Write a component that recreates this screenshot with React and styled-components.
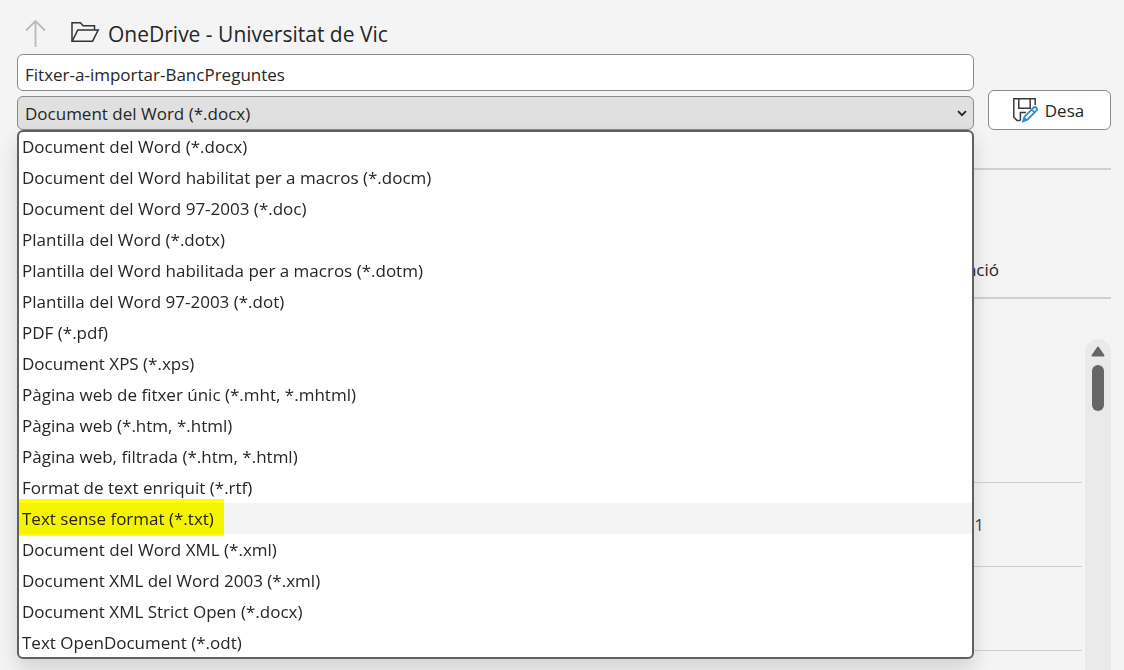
import React, { useState } from 'react';
import styled, { createGlobalStyle } from 'styled-components';

const formats = [
    'Document del Word (*.docx)',
    'Document del Word habilitat per a macros (*.docm)',
    'Document del Word 97-2003 (*.doc)',
    'Plantilla del Word (*.dotx)',
    'Plantilla del Word habilitada per a macros (*.dotm)',
    'Plantilla del Word 97-2003 (*.dot)',
    'PDF (*.pdf)',
    'Document XPS (*.xps)',
    'Pàgina web de fitxer únic (*.mht, *.mhtml)',
    'Pàgina web (*.htm, *.html)',
    'Pàgina web, filtrada (*.htm, *.html)',
    'Format de text enriquit (*.rtf)',
    'Text sense format (*.txt)',
    'Document del Word XML (*.xml)',
    'Document XML del Word 2003 (*.xml)',
    'Document XML Strict Open (*.docx)',
    'Text OpenDocument (*.odt)',
];

const ArrowUp = () => (
    <svg width='22' height='28' viewBox='0 0 22 28' fill='none' stroke='#bababa' strokeWidth='1.8' aria-hidden='true'>
        <path d='M11.500 28V2M2 11.500 11.500 2l9.500 9.500' />
    </svg>
);

const FolderOpen = () => (
    <svg width='30' height='22' viewBox='0 0 30 22' fill='none' stroke='#333' strokeWidth='1.5' strokeLinejoin='miter' aria-hidden='true'>
        <path d='M2 20.200V1.800h8.500l2.600 3h11.400v4' />
        <path d='M2.200 20.200 7.800 9h20.400l-5.600 11.200z' />
    </svg>
);

const SaveAs = () => (
    <svg width='26' height='26' viewBox='0 0 26 26' fill='none' strokeWidth='1.500' aria-hidden='true'>
        <g stroke='#3b3b3b'>
            <path d='M23.200 8V1.800H1.800v18.400l3.200 3.200h3.400' />
            <path d='M6.800 1.800v9.400h11.400V1.800' />
            <path d='M8.400 23.400v-7.800h5.600' />
        </g>
        <path d='M11.200 24.200l1.600-4.800 8.600-8.600a2 2 0 0 1 2.900 2.900l-8.600 8.700z' stroke='#2b8fd6' strokeWidth='1.900' fill='#fff' />
        <path d='M10 25.200l1.900-5.600 3.700 3.700z' fill='#2b8fd6' />
        <path d='M19.600 12.600l2.900 2.900' stroke='#2b8fd6' />
    </svg>
);

const App = () => {
    const [name, setName] = useState('Fitxer-a-importar-BancPreguntes');
    const [format, setFormat] = useState(formats[0]);

    return (
        <>
            <GlobalStyle />
            <Page>
                <Location>
                    <UpButton type='button' aria-label='Amunt'><ArrowUp /></UpButton>
                    <FolderOpen />
                    <h1>OneDrive - Universitat de Vic</h1>
                </Location>

                <SaveForm onSubmit={(e) => e.preventDefault()}>
                    <Fields>
                        <NameInput aria-label='Nom del fitxer' value={name} onChange={(e) => setName(e.target.value)} />
                        <SelectBox>
                            <FormatSelect aria-label='Tipus de fitxer' value={format} onChange={(e) => setFormat(e.target.value)}>
                                {formats.map((f) => <option key={f}>{f}</option>)}
                            </FormatSelect>
                            <Chevron viewBox='0 0 10 7' aria-hidden='true'>
                                <path d='M1 1.200 5 5.200l4-4' />
                            </Chevron>
                            <Menu role='listbox' aria-label='Tipus de fitxer'>
                                {formats.map((f, i) => (
                                    <MenuItem key={f} role='option' aria-selected={f === format} $active={i === 12} onClick={() => setFormat(f)}>
                                        {f}
                                    </MenuItem>
                                ))}
                            </Menu>
                        </SelectBox>
                    </Fields>
                    <SaveButton type='submit'>
                        <SaveAs />
                        Desa
                    </SaveButton>
                </SaveForm>

                <ListHeader>ació</ListHeader>

                <Files>
                    <FileTable>
                        <tbody>
                            <FileRow $tall><td /></FileRow>
                            <FileRow><td>1</td></FileRow>
                            <FileRow><td /></FileRow>
                            <FileRow><td /></FileRow>
                        </tbody>
                    </FileTable>
                    <ScrollTrack>
                        <svg width='14' height='11' viewBox='0 0 14 11' aria-hidden='true'>
                            <path d='M7 1.500 12.500 9.500h-11z' fill='#666' stroke='#666' strokeWidth='2' strokeLinejoin='round' />
                        </svg>
                        <ScrollThumb />
                    </ScrollTrack>
                </Files>
            </Page>
        </>
    );
};

const GlobalStyle = createGlobalStyle`
* {
    box-sizing: border-box;
}

body {
    margin: 0;
    background: #f4f4f4;
    color: #262626;
    font-family: 'Segoe UI', 'Open Sans', 'Noto Sans', sans-serif;
    font-size: 17px;
}

input, select, button {
    font: inherit;
    color: inherit;
}
`;

const Page = styled.main`
    display: flex;
    flex-direction: column;
    height: 100vh;
    padding: 0 13px 0 17px;
    overflow: hidden;
`;

const Location = styled.header`
    display: flex;
    align-items: center;
    height: 54px;
    padding: 12px 0 0 7px;

    h1 {
        margin: 2px 0 0 8px;
        font-size: 21px;
        font-weight: 400;
        line-height: 32px;
    }

    > svg {
        margin-bottom: 3px;
    }
`;

const UpButton = styled.button`
    display: flex;
    margin-right: 24px;
    padding: 0;
    border: 0;
    background: none;
`;

const SaveForm = styled.form`
    display: flex;
    align-items: flex-end;
    gap: 14px;
`;

const Fields = styled.div`
    display: flex;
    flex: 1;
    flex-direction: column;
    gap: 5px;
`;

const NameInput = styled.input`
    width: 100%;
    height: 37px;
    padding: 4px 7px 0;
    border: 1px solid #8a8a8a;
    border-radius: 6px;
    background: #fff;
    outline: none;
`;

const SelectBox = styled.div`
    position: relative;
`;

const FormatSelect = styled.select`
    display: block;
    width: 100%;
    height: 34px;
    padding: 0 7px;
    border: 1px solid #8a8a8a;
    border-radius: 6px;
    background: #e0e0e0;
    appearance: none;
`;

const Chevron = styled.svg`
    position: absolute;
    top: 14px;
    right: 7px;
    width: 10px;
    height: 7px;
    fill: none;
    stroke: #222;
    stroke-width: 1.700;
    pointer-events: none;
`;

const Menu = styled.ul`
    position: absolute;
    top: 100%;
    left: 0;
    right: 0;
    z-index: 2;
    margin: 0;
    padding: 0;
    list-style: none;
    border: 2px solid #606060;
    border-radius: 6px;
    background: #fff;
    box-shadow: 0 10px 20px rgba(0, 0, 0, 0.14);
`;

const MenuItem = styled.li`
    position: relative;
    height: 31px;
    padding-left: 3px;
    line-height: 32px;
    background: ${({ $active }) => ($active ? '#f4f4f4' : 'transparent')};

    &:first-child,
    &:last-child {
        height: 30px;
    }

    &:first-child {
        line-height: 30px;
    }

    /* marker stroke over the active format */
    &::after {
        content: '';
        display: ${({ $active }) => ($active ? 'block' : 'none')};
        position: absolute;
        top: -4px;
        bottom: -2px;
        left: 0;
        width: 205px;
        background: #ff0;
        mix-blend-mode: multiply;
    }
`;

const SaveButton = styled.button`
    display: flex;
    align-items: center;
    justify-content: center;
    gap: 7px;
    width: 123px;
    height: 40px;
    padding: 0 3px 0 0;
    border: 1px solid #8a8a8a;
    border-radius: 6px;
    background: #fff;
`;

const ListHeader = styled.div`
    display: flex;
    flex-shrink: 0;
    align-items: flex-end;
    justify-content: flex-end;
    height: 131px;
    margin-top: 38px;
    padding: 0 112px 16px 0;
    border-top: 2px solid #d0d0d0;
    border-bottom: 2px solid #d0d0d0;
`;

const Files = styled.section`
    display: flex;
    flex: 1;
    align-items: flex-start;
    gap: 3px;
    min-height: 0;
    margin-top: 40px;
    overflow: hidden;
`;

const FileTable = styled.table`
    flex: 1;
    border-collapse: collapse;
`;

const FileRow = styled.tr`
    height: ${({ $tall }) => ($tall ? '143px' : '84px')};

    td {
        padding: 0 98px 0 0;
        border-bottom: 1px solid #d0d0d0;
        color: #444;
        text-align: right;
    }
`;

const ScrollTrack = styled.div`
    display: flex;
    flex-direction: column;
    align-items: center;
    align-self: stretch;
    gap: 8px;
    width: 26px;
    padding-top: 7px;
    border-radius: 13px 13px 0 0;
    background: #eaeaea;

    svg {
        flex-shrink: 0;
    }
`;

const ScrollThumb = styled.div`
    width: 12px;
    height: 46px;
    border-radius: 6px;
    background: #666;
`;

export default App;
